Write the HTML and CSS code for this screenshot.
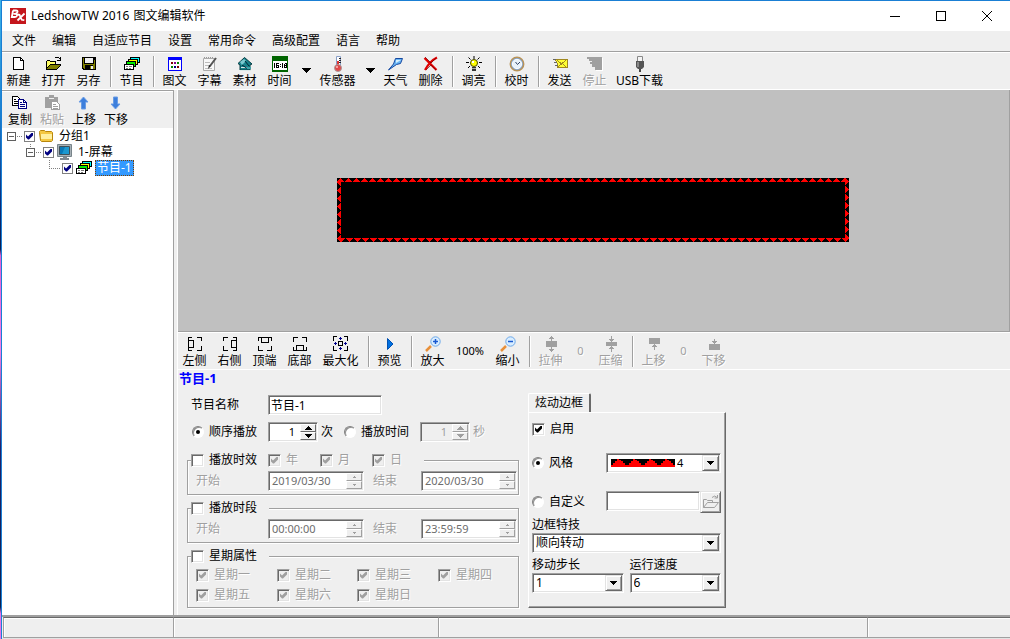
FILE: index.html
```html
<!DOCTYPE html>
<html lang="zh-CN">
<head>
<meta charset="utf-8">
<title>LedshowTW 2016图文编辑软件</title>
<link rel="stylesheet" href="styles.css">
</head>
<body>
<svg width="0" height="0" class="defs" aria-hidden="true">
  <symbol id="i-program" viewBox="0 0 16 16"><path fill="#0ff" stroke="#000" d="M6.500 1.500h9v5h-9z"/><path fill="#ff0" stroke="#000" d="M4.500 3.500h9v5h-9z"/><path fill="#0e0" stroke="#000" d="M2.500 5.500h9v5h-9z"/><path fill="#fff" stroke="#000" d="M.5 8.500h9v5h-9z"/><path fill="#777" d="M2 10h2v1H2zM5 10h3v1H5zM2 12h2v1H2zM5 12h2v1H5z"/></symbol>
  <symbol id="i-open" viewBox="0 0 16 16"><path fill="#000" d="M0 5h1V4h3v1h6v3h5v1l-4 5H0z"/><path fill="#ff6" d="M1 5h3v1h5v2H4l-3 4z"/><path fill="#808000" d="M4 9h10l-3 4H1z"/><path fill="none" stroke="#000" d="M8.500 2.500l1-1h3l2 2M14.500 1v3.500H11"/></symbol>
  <symbol id="i-max-corners" viewBox="0 0 16 16"><path fill="none" stroke="#000" d="M4 .5H.5V5M.500 10v4.500H4M11 .5h3.500V5M14.500 10v4.500H11"/></symbol>
  <symbol id="i-down" viewBox="0 0 9 5"><path fill="#000" d="M0 0h9L4.500 5z"/></symbol>
</svg>

<div class="window">
  <header class="titlebar">
    <svg class="logo" viewBox="0 0 16 16"><rect width="16" height="16" fill="#c4161c"/><path fill="none" stroke="#fff" stroke-width="1.800" d="M3 2.500h3q2 0 1.500 1.500t-2.500 1.800H3.500M3 2.500L1.800 9h3q2 0 2.300-1.600T5 5.800M7.500 6.500l2 .3 2.300 5 2.500.4M14.500 5.500L7.500 12.500"/></svg>
    <h1 class="title"><span class="title-name">LedshowTW 2016</span>图文编辑软件</h1>
    <div class="window-buttons">
      <button type="button" aria-label="最小化"><svg viewBox="0 0 10 10"><path d="M0 5.500h10"/></svg></button>
      <button type="button" aria-label="最大化窗口"><svg viewBox="0 0 10 10"><path d="M.5 .5h9v9h-9z"/></svg></button>
      <button type="button" aria-label="关闭"><svg viewBox="0 0 10 10" class="smooth"><path d="M0 0l10 10M10 0L0 10"/></svg></button>
    </div>
  </header>

  <nav class="menubar">
    <button type="button">文件</button><button type="button">编辑</button><button type="button">自适应节目</button><button type="button">设置</button><button type="button">常用命令</button><button type="button">高级配置</button><button type="button">语言</button><button type="button">帮助</button>
  </nav>

  <div class="toolbar main-tools">
    <button type="button" class="tool"><svg viewBox="0 0 16 16"><path fill="#fff" stroke="#000" d="M2.500 1.500h7l3 3v9h-10z"/><path fill="none" stroke="#000" d="M9.500 1.500v3h3"/></svg>新建</button>
    <button type="button" class="tool"><svg viewBox="0 0 16 16"><use href="#i-open"/></svg>打开</button>
    <button type="button" class="tool"><svg viewBox="0 0 16 16"><path fill="#000" d="M1 1h14v13H2l-1-1z"/><path fill="#808000" d="M2 2h1v6h10V4h1v9H3l-1-1z"/><path fill="#efefef" d="M4 2h8v5H4zM10 10h2v3h-2z"/><path fill="#000" d="M4 9h8v1H4zM4 10h5v4H4z"/></svg>另存</button>
    <i class="sep"></i>
    <button type="button" class="tool"><svg viewBox="0 0 16 16"><use href="#i-program"/></svg>节目</button>
    <i class="sep"></i>
    <button type="button" class="tool"><svg viewBox="0 0 16 16"><path fill="#00f" d="M1 1h14v14H1z"/><path fill="#fff" d="M2 4h12v10H2z"/><path fill="#800000" d="M4 6h2v2H4zM10 10h2v2h-2z"/><path fill="#808" d="M7 6h2v2H7z"/><path fill="#080" d="M10 6h2v2h-2zM4 10h2v2H4z"/><path fill="#008" d="M7 10h2v2H7z"/></svg>图文</button>
    <button type="button" class="tool"><svg viewBox="0 0 16 16" class="smooth"><path fill="#f8f8f8" stroke="#aaa" d="M1.500 2.500h11v12h-11z"/><path stroke="#999" stroke-dasharray="1 1" d="M2 1.500h10"/><path stroke="#bbb" d="M3 6.500h5M3 9.500h4M3 12.500h7"/><path stroke="#555" stroke-width="2" d="M14 2L8 10"/><path fill="#222" d="M7 9l2 1-3 3z"/></svg>字幕</button>
    <button type="button" class="tool"><svg viewBox="0 0 16 16" class="smooth"><path fill="#17818a" stroke="#063d43" d="M1 7.500L7.500 1.500 15 8l-2 1v5H3V9z"/><path fill="#7cc9d0" d="M3 6l4-3 2 2-4 4z"/><path fill="#d9e8e8" d="M4 11h6v1H4zM3 14h11v1H3z"/><path stroke="#023" d="M8 5l4 5M5 9l6 4"/><path fill="#3fa3aa" d="M10 11h4v2h-4z"/></svg>素材</button>
    <button type="button" class="tool"><svg viewBox="0 0 16 16"><path fill="#006400" d="M0 0h16v16H0z"/><path fill="#fff" d="M1 5h14v9H1z"/><path fill="none" stroke="#000" d="M2.500 7v5M6.500 7.500h-2v4h2v-2h-2M8.500 8v1M8.500 10v1M10.500 7v5M12.500 7.500h2v4h-2v-4M12 9.500h2"/></svg>时间</button>
    <button type="button" class="drop" aria-label="时间选项"><svg viewBox="0 0 9 5"><use href="#i-down"/></svg></button>
    <button type="button" class="tool medium"><svg viewBox="0 0 16 16" class="smooth"><path fill="#fff" stroke="#8aa0c8" d="M6.500.5h4v11h-4z"/><path stroke="#222" d="M9 2.500h2M9 4.500h2M9 6.500h2"/><path fill="#d33" d="M7 5h2v6H7z"/><circle cx="8" cy="12" r="3.500" fill="#e04848" stroke="#a99"/><circle cx="7" cy="11" r="1" fill="#fbb"/></svg>传感器</button>
    <button type="button" class="drop" aria-label="传感器选项"><svg viewBox="0 0 9 5"><use href="#i-down"/></svg></button>
    <button type="button" class="tool"><svg viewBox="0 0 16 16" class="smooth"><path fill="#69b5f4" stroke="#1648a0" d="M7.500 2.500h7l-2 5-4 1-8 5.500 5-6z"/><path fill="#d4f0ff" d="M8 4h5L8 7z"/></svg>天气</button>
    <button type="button" class="tool"><svg viewBox="0 0 16 16" class="smooth"><path fill="none" stroke="#e00000" stroke-width="2.200" d="M1.500 2l12 12M14 1.500Q7 5 2 14"/><path fill="none" stroke="#700" stroke-width=".7" d="M2 1l6 6 5-5M3 14l5-5 5 5"/></svg>删除</button>
    <i class="sep"></i>
    <button type="button" class="tool"><svg viewBox="0 0 16 16" class="smooth"><path stroke="#000" d="M8 0v3M2.500 1.500l2 2M13.500 1.500l-2 2M0 6.500h3M13 6.500h3M2 12l2-2M14 12l-2-2"/><circle cx="8" cy="7" r="3.500" fill="#ff0" stroke="#440"/><path fill="#fff" d="M6 5h2v2H6z"/><path fill="#333" d="M6 11h4v4H6z"/><path stroke="#aaa" d="M6 12.500h4"/></svg>调亮</button>
    <i class="sep"></i>
    <button type="button" class="tool"><svg viewBox="0 0 16 16" class="smooth"><circle cx="8" cy="8" r="6.700" fill="#7fa6d8" stroke="#b89358" stroke-width="1.500"/><circle cx="8" cy="8" r="4.700" fill="#e8f2fb" stroke="#fff"/><path fill="none" stroke="#346" d="M6.500 6l2 2.500L11 6"/></svg>校时</button>
    <i class="sep"></i>
    <button type="button" class="tool"><svg viewBox="0 0 16 16"><path fill="#ff3" stroke="#a08820" d="M3.500 3.500h12v8h-10v-3z"/><path fill="none" stroke="#a08820" d="M5 4l4.500 4L14 4M6 11l3-3M14 11l-3-3"/><path stroke="#666" d="M1 3.500h3M2 6.500h3M3 9.500h3"/></svg>发送</button>
    <button type="button" class="tool" disabled><svg viewBox="0 0 16 16"><path fill="#fff" d="M6 2h10v13H9v-4H6z"/><path fill="#a0a0a0" d="M0 1h15v13H8v-3H5V8H3V6h2V5H2V3H0z"/></svg>停止</button>
    <button type="button" class="tool wide"><svg viewBox="0 0 16 16" class="smooth"><path fill="#f4f4f4" stroke="#888" d="M5.500.5h5v5h-5z"/><path fill="#555" d="M4 5h8v6l-2 2H6l-2-2z"/><path fill="#888" d="M5 6h2v5H5z"/><path fill="#444" d="M7 13h2v3H7z"/></svg>USB下载</button>
  </div>

  <main class="workspace">
    <aside class="side">
      <div class="side-tools">
        <button type="button" class="tool"><svg viewBox="0 0 16 16"><path fill="#fff" stroke="#000" d="M.5 1.500h5l3 3v6h-8z"/><path fill="none" stroke="#000" d="M2 4.500h2M2 6.500h4M2 8.500h4"/><path fill="#fff" stroke="#000080" d="M6.500 4.500h5l3 3v6h-8z"/><path fill="none" stroke="#000080" d="M11.500 4v3.500h3M8 7.500h2M8 9.500h5M8 11.500h5"/></svg>复制</button>
        <button type="button" class="tool" disabled><svg viewBox="0 0 16 16"><path fill="#a0a0a0" d="M1 2h4V0h5v2h4v11H1z"/><path fill="#efefef" d="M5 3h5v1H5z"/><path fill="#fff" stroke="#a0a0a0" d="M7.500 6.500h5l3 3v5h-8z"/><path stroke="#a0a0a0" d="M9 9.500h3M9 11.500h5M9 13.500h5"/></svg>粘贴</button>
        <button type="button" class="tool"><svg viewBox="0 0 16 16" class="smooth"><path fill="#3d7fdc" stroke="#6a9ce4" d="M7.500 2l4.500 5H9.500v7h-4V7H3z"/></svg>上移</button>
        <button type="button" class="tool"><svg viewBox="0 0 16 16" class="smooth"><path fill="#3d7fdc" stroke="#6a9ce4" d="M7.500 14L12 9H9.500V2h-4v7H3z"/></svg>下移</button>
      </div>
      <ul class="tree">
        <li><div class="node">
          <svg class="branch" viewBox="0 0 15 16"><path class="box" d="M.5 4.500h8v8h-8zM2 8.500h5"/><path class="dots" d="M10 8.500h5"/></svg>
          <input type="checkbox" class="flat" id="n1" checked>
          <svg class="pic smooth" viewBox="0 0 16 16"><path fill="#f4c842" stroke="#b8860b" d="M1.500 4.500v-1l1-1h4l1 1h6l1 1v8l-1 1h-10l-1-1z"/><path fill="#fff0a0" d="M3 6h11v5H3z"/></svg>
          <label for="n1">分组1</label></div>
          <ul>
            <li><div class="node">
              <svg class="branch" viewBox="0 0 15 16"><path class="dots" d="M4.500 0v4"/><path class="box" d="M.5 4.500h8v8h-8zM2 8.500h5"/><path class="dots" d="M10 8.500h5"/></svg>
              <input type="checkbox" class="flat" id="n2" checked>
              <svg class="pic smooth" viewBox="0 0 16 16"><path fill="#a8b2b8" stroke="#78848a" d="M.5 .5h14v12H.5z"/><path fill="#0878b8" stroke="#405058" d="M2.500 2.500h10v8h-10z"/><path fill="#1c98d0" d="M8 3h4v7H5z"/><path fill="#808890" d="M6 13h4v1H6zM3 14h9v2H3z"/></svg>
              <label for="n2">1-屏幕</label></div>
              <ul>
                <li><div class="node">
                  <svg class="branch" viewBox="0 0 15 16"><path class="dots" d="M4.500 0v8.500H15"/></svg>
                  <input type="checkbox" class="flat" id="n3" checked>
                  <svg class="pic" viewBox="0 0 16 16"><use href="#i-program"/></svg>
                  <label for="n3" class="selected">节目-1</label></div></li>
              </ul></li>
          </ul></li>
      </ul>
    </aside>

    <section class="content">
      <div class="stage">
        <svg class="led" viewBox="0 0 512 64">
          <defs>
            <pattern id="up" width="8" height="4" patternUnits="userSpaceOnUse"><path fill="red" d="M3 0h1v1h1v1h1v1h1v1H0V3h1V2h1V1h1z"/></pattern>
            <pattern id="dn" width="8" height="4" patternUnits="userSpaceOnUse"><path fill="red" d="M1 0h7v1H7v1H6v1H5v1H4V3H3V2H2V1H1z"/></pattern>
            <pattern id="lf" width="4" height="8" patternUnits="userSpaceOnUse"><path fill="red" d="M4 1v7H3V7H2V6H1V5H0V4h1V3h1V2h1V1z"/></pattern>
            <pattern id="rt" width="4" height="8" patternUnits="userSpaceOnUse"><path fill="red" d="M0 0v7h1V6h1V5h1V4h1V3H3V2H2V1H1V0z"/></pattern>
          </defs>
          <rect width="512" height="64"/>
          <rect width="4" height="64" fill="url(#lf)"/><rect x="508" width="4" height="64" fill="url(#rt)"/>
          <rect width="512" height="4" fill="url(#up)"/><rect y="60" width="512" height="4" fill="url(#dn)"/>
        </svg>
      </div>

      <div class="toolbar align-tools">
        <button type="button" class="tool"><svg viewBox="0 0 16 16"><path fill="none" stroke="#000" d="M5 1.500H1.500v13H5M1.500 4.500h5v7h-5M10 1.500h4.500V5M14.500 10v4.500H10"/></svg>左侧</button>
        <button type="button" class="tool"><svg viewBox="0 0 16 16"><path fill="none" stroke="#000" d="M11 1.500h3.500v13H11M14.500 4.500h-5v7h5M6 1.500H1.500V5M1.500 10v4.500H6"/></svg>右侧</button>
        <button type="button" class="tool"><svg viewBox="0 0 16 16"><path fill="none" stroke="#000" d="M1.500 5V1.500h13V5M4.500 1.500v5h7v-5M1.500 10v4.500H6M14.500 10v4.500H10"/></svg>顶端</button>
        <button type="button" class="tool"><svg viewBox="0 0 16 16"><path fill="none" stroke="#000" d="M1.500 11v3.500h13V11M4.500 14.500v-5h7v5M1.500 6V1.500H6M14.500 6V1.500H10"/></svg>底部</button>
        <button type="button" class="tool medium"><svg viewBox="0 0 16 16"><use href="#i-max-corners" width="16" height="16"/><path fill="none" stroke="#000" d="M5.500 5.500h4v4h-4z"/><path fill="none" stroke="#00008b" d="M7.500 1v3M6 2.500h3M7.500 11v3M6 12.500h3M1 7.500h3M2.500 6v3M11 7.500h3M12.500 6v3"/></svg>最大化</button>
        <i class="sep"></i>
        <button type="button" class="tool"><svg viewBox="0 0 16 16" class="smooth"><path fill="#0070e0" stroke="#0050b0" d="M5.500 2.500L11 8l-5.500 5.500z"/></svg>预览</button>
        <i class="sep"></i>
        <button type="button" class="tool"><svg viewBox="0 0 16 16" class="smooth"><path stroke="#e8903a" stroke-width="2.500" d="M1 15l5-5"/><circle cx="10.500" cy="5.500" r="4.700" fill="#d8edff" stroke="#6da8e8"/><path stroke="#1858d0" stroke-width="1.500" d="M8 5.500h5M10.500 3v5"/></svg>放大</button>
        <output class="zoom">100%</output>
        <button type="button" class="tool"><svg viewBox="0 0 16 16" class="smooth"><path stroke="#e8903a" stroke-width="2.500" d="M1 15l5-5"/><circle cx="10.500" cy="5.500" r="4.700" fill="#d8edff" stroke="#6da8e8"/><path stroke="#1858d0" stroke-width="1.500" d="M8 5.500h5"/></svg>缩小</button>
        <i class="sep"></i>
        <button type="button" class="tool" disabled><svg viewBox="0 0 16 16"><path fill="#a0a0a0" d="M3 5h11v6H3zM8 0h1v1h1v1h1v1H9v2H8V3H6V2h1V1h1zM8 16h1v-1h1v-1h1v-1H9v-2H8v2H6v1h1v1h1z"/></svg>拉伸</button>
        <output class="count">0</output>
        <button type="button" class="tool" disabled><svg viewBox="0 0 16 16"><path fill="#a0a0a0" d="M3 6h11v4H3zM8 0h1v3h2v1h-1v1H9v1H8V5H7V4H6V3h2zM8 16h1v-3h2v-1h-1v-1H9v-1H8v1H7v1H6v1h2z"/></svg>压缩</button>
        <i class="sep"></i>
        <button type="button" class="tool" disabled><svg viewBox="0 0 16 16"><path fill="#a0a0a0" d="M3 2h11v6H3zM8 14h1v-3h2v-1h-1V9H9V8H8v1H7v1H6v1h2z"/></svg>上移</button>
        <output class="count">0</output>
        <button type="button" class="tool" disabled><svg viewBox="0 0 16 16"><path fill="#a0a0a0" d="M3 8h11v6H3zM8 3h1v2h2v1h-1v1H9v1H8V7H7V6H6V5h2z"/></svg>下移</button>
      </div>

      <form class="properties">
        <h2>节目-1</h2>
        <div class="columns">
          <div class="basic">
            <div class="row name-row"><label for="pname">节目名称</label><input id="pname" class="field sunken" type="text" value="节目-1"></div>
            <div class="row play-row">
              <label class="choice"><input type="radio" name="mode" checked>顺序播放</label>
              <span class="spin sunken"><input type="text" value="1" aria-label="播放次数"><span class="arrows"><button type="button" aria-label="增加"><svg viewBox="0 0 7 4"><path d="M0 4h7L3.500 0z"/></svg></button><button type="button" aria-label="减少"><svg viewBox="0 0 7 4"><path d="M0 0h7L3.500 4z"/></svg></button></span></span>
              <span class="unit">次</span>
              <label class="choice"><input type="radio" name="mode">播放时间</label>
              <span class="spin sunken off"><input type="text" value="1" aria-label="播放秒数" disabled><span class="arrows"><button type="button" aria-label="增加" disabled><svg viewBox="0 0 7 4"><path d="M0 4h7L3.500 0z"/></svg></button><button type="button" aria-label="减少" disabled><svg viewBox="0 0 7 4"><path d="M0 0h7L3.500 4z"/></svg></button></span></span>
              <span class="unit off">秒</span>
            </div>

            <fieldset>
              <legend class="validity">
                <label class="choice"><input type="checkbox">播放时效</label>
                <label class="choice off"><input type="checkbox" checked disabled>年</label>
                <label class="choice off"><input type="checkbox" checked disabled>月</label>
                <label class="choice off"><input type="checkbox" checked disabled>日</label>
              </legend>
              <div class="range">
                <label class="off" for="d1">开始</label>
                <span class="spin date sunken"><input id="d1" type="text" value="2019/03/30" disabled><span class="arrows"><button type="button" aria-label="增加" disabled><svg viewBox="0 0 7 4"><path d="M2 3h3L3.500 1z"/></svg></button><button type="button" aria-label="减少" disabled><svg viewBox="0 0 7 4"><path d="M2 1h3L3.500 3z"/></svg></button></span></span>
                <label class="off" for="d2">结束</label>
                <span class="spin date sunken"><input id="d2" type="text" value="2020/03/30" disabled><span class="arrows"><button type="button" aria-label="增加" disabled><svg viewBox="0 0 7 4"><path d="M2 3h3L3.500 1z"/></svg></button><button type="button" aria-label="减少" disabled><svg viewBox="0 0 7 4"><path d="M2 1h3L3.500 3z"/></svg></button></span></span>
              </div>
            </fieldset>

            <fieldset>
              <legend><label class="choice"><input type="checkbox">播放时段</label></legend>
              <div class="range">
                <label class="off" for="t1">开始</label>
                <span class="spin date sunken"><input id="t1" type="text" value="00:00:00" disabled><span class="arrows"><button type="button" aria-label="增加" disabled><svg viewBox="0 0 7 4"><path d="M2 3h3L3.500 1z"/></svg></button><button type="button" aria-label="减少" disabled><svg viewBox="0 0 7 4"><path d="M2 1h3L3.500 3z"/></svg></button></span></span>
                <label class="off" for="t2">结束</label>
                <span class="spin date sunken"><input id="t2" type="text" value="23:59:59" disabled><span class="arrows"><button type="button" aria-label="增加" disabled><svg viewBox="0 0 7 4"><path d="M2 3h3L3.500 1z"/></svg></button><button type="button" aria-label="减少" disabled><svg viewBox="0 0 7 4"><path d="M2 1h3L3.500 3z"/></svg></button></span></span>
              </div>
            </fieldset>

            <fieldset>
              <legend><label class="choice"><input type="checkbox">星期属性</label></legend>
              <div class="week">
                <label class="choice off"><input type="checkbox" checked disabled>星期一</label>
                <label class="choice off"><input type="checkbox" checked disabled>星期二</label>
                <label class="choice off"><input type="checkbox" checked disabled>星期三</label>
                <label class="choice off"><input type="checkbox" checked disabled>星期四</label>
                <label class="choice off"><input type="checkbox" checked disabled>星期五</label>
                <label class="choice off"><input type="checkbox" checked disabled>星期六</label>
                <label class="choice off"><input type="checkbox" checked disabled>星期日</label>
              </div>
            </fieldset>
          </div>

          <div class="border-tabs">
            <button type="button" class="tab">炫动边框</button>
            <div class="tab-panel">
              <label class="choice enable"><input type="checkbox" checked>启用</label>
              <div class="pair style-row">
                <label class="choice"><input type="radio" name="border" checked>风格</label>
                <span class="combo sunken"><select class="with-swatch" aria-label="边框风格"><option>4</option></select>
                  <svg class="swatch" viewBox="0 0 64 8"><path d="M0 0h64v8H0z"/><path fill="red" d="M6 0h2v1h2v1h2v2h2v2h2v2H0V6h2V4h2V2h2zM22 0h2v1h2v1h2v2h2v2h2v2H16V6h2V4h2V2h2zM38 0h2v1h2v1h2v2h2v2h2v2H32V6h2V4h2V2h2zM54 0h2v1h2v1h2v2h2v2h2v2H48V6h2V4h2V2h2z"/></svg>
                  <span class="combo-arrow raised"><svg viewBox="0 0 7 4"><path d="M0 0h7L3.500 4z"/></svg></span></span>
              </div>
              <div class="pair custom-row">
                <label class="choice"><input type="radio" name="border">自定义</label>
                <span class="file"><input type="text" class="field sunken" aria-label="自定义边框文件"><button type="button" class="raised" aria-label="打开边框文件" disabled><svg viewBox="0 0 16 16" class="smooth"><path fill="none" stroke="#a0a0a0" d="M.5 13.500v-8h3l1 1h5v2M.5 13.500l4-5h11l-4 5zM9 3.500q3-3 5 0M14.500 1v3h-3"/></svg></button></span>
              </div>
              <label class="caption" for="fx">边框特技</label>
              <span class="combo sunken"><select id="fx"><option>顺向转动</option></select><span class="combo-arrow raised"><svg viewBox="0 0 7 4"><path d="M0 0h7L3.500 4z"/></svg></span></span>
              <div class="halves">
                <div><label class="caption" for="step">移动步长</label>
                <span class="combo sunken"><select id="step"><option>1</option></select><span class="combo-arrow raised"><svg viewBox="0 0 7 4"><path d="M0 0h7L3.500 4z"/></svg></span></span></div>
                <div><label class="caption" for="speed">运行速度</label>
                <span class="combo sunken"><select id="speed"><option>6</option></select><span class="combo-arrow raised"><svg viewBox="0 0 7 4"><path d="M0 0h7L3.500 4z"/></svg></span></span></div>
              </div>
            </div>
          </div>
        </div>
      </form>
    </section>
  </main>

  <footer class="statusbar"><span class="s1"></span><span class="s2"></span><span class="s3"></span><span class="s4"></span></footer>
</div>
</body>
</html>
```
FILE: styles.css
```css
* { box-sizing: border-box; }

body {
  margin: 0;
  height: 100vh;
  display: flex;
  padding-left: 1px;
  background: linear-gradient(#3cb4e8, #1a7fd0 18%, #0a2a78 32%, #0a1c50 39%, #e060d8 40%, #f080e8 55%, #20206a 70%, #0a2050 95%, #e870e8 96%);
  font: 12px/16px "Noto Sans", "Noto Sans CJK SC", sans-serif;
  color: #000;
  overflow: hidden;
}

button, input, select { font: inherit; color: inherit; margin: 0; padding: 0; border: 0; background: none; min-width: 0; }
h1, h2, ul { margin: 0; padding: 0; font: inherit; list-style: none; }
svg { display: block; shape-rendering: crispEdges; flex: none; }
svg.smooth { shape-rendering: auto; }
.defs { display: none; }

.window {
  flex: 1;
  min-width: 0;
  display: flex;
  flex-direction: column;
  border: solid #1a7fd4;
  border-width: 1px 0 0 1px;
  background: #efefef;
}

/* Bevels */
.sunken {
  border: 1px solid;
  border-color: #a0a0a0 #fff #fff #a0a0a0;
  box-shadow: inset 1px 1px #696969, inset -1px -1px #e3e3e3;
  background: #fff;
}
.raised {
  border: 1px solid;
  border-color: #e3e3e3 #696969 #696969 #e3e3e3;
  box-shadow: inset 1px 1px #fff, inset -1px -1px #a0a0a0;
  background: #efefef;
}

/* Title and menu */
.titlebar { display: flex; align-items: center; height: 30px; padding-left: 8px; background: #fff; }
.logo { width: 16px; height: 16px; shape-rendering: auto; }
.title { flex: 1; margin-left: 5px; }
.title-name { margin-right: 4px; }
.window-buttons { display: flex; }
.window-buttons button { width: 46px; height: 28px; display: grid; place-items: center; }
.window-buttons svg { width: 10px; height: 10px; fill: none; stroke: #000; }

.menubar {
  display: flex;
  gap: 16px;
  height: 21px;
  padding: 2px 10px;
  border-bottom: 1px solid #a0a0a0;
  line-height: 16px;
}

/* Tool strips */
.toolbar { display: flex; height: 38px; padding-top: 3px; border: solid #fff; border-width: 1px 0; }
.tool {
  width: 35px;
  padding-right: 2px;
  display: flex;
  flex-direction: column;
  align-items: center;
  line-height: 17px;
  white-space: nowrap;
}
.tool svg { width: 16px; height: 16px; }
.tool.medium { width: 47px; }
.tool.wide { width: 55px; }
.tool:disabled, .off, .count { color: #a0a0a0; text-shadow: 1px 1px #fff; }
.sep { width: 8px; margin-bottom: 2px; display: flex; justify-content: center; }
.sep::before { content: ""; width: 2px; background: linear-gradient(90deg, #a0a0a0 50%, #fff 50%); }
.drop { width: 17px; height: 28px; display: grid; place-items: center; }
.drop svg { width: 9px; height: 5px; }
.zoom, .count { padding-right: 2px; font-size: 11px; line-height: 30px; text-align: center; }
.zoom { width: 40px; }
.count { width: 25px; }

/* Work area */
.workspace { flex: 1; min-height: 0; display: flex; }
.side {
  width: 172px;
  display: flex;
  flex-direction: column;
  border: solid #a0a0a0;
  border-width: 1px 1px 0 0;
  background: #fff;
}
.side-tools { display: flex; height: 36px; margin-top: 1px; padding: 3px 0 0 3px; background: #efefef; }
.side-tools .tool { width: 32px; }
.tree { flex: 1; padding-left: 5px; }
.tree ul { padding-left: 19px; }
.node { display: flex; align-items: center; height: 16px; }
.branch { width: 15px; height: 16px; fill: none; margin-right: 2px; }
.box { stroke: #606060; }
.dots { stroke: #808080; stroke-dasharray: 1 1; }
.pic { width: 16px; height: 16px; margin-left: 3px; }
.node label { margin-left: 3px; padding: 0 1px; border: 1px solid transparent; line-height: 14px; }
.node .selected { background: #3399ff; color: #fff; border: 1px dotted #7a4000; }

.content { flex: 1; min-width: 0; display: flex; flex-direction: column; margin-left: 3px; border-left: 1px solid #fff; }
.stage { flex: 1; display: grid; place-items: center; padding: 0 1px 1px 0; background: #c0c0c0; border: solid #a0a0a0; border-width: 0 1px 1px 0; }
.led { width: 512px; height: 64px; }
.align-tools { height: 38px; }

/* Program properties */
.properties { padding-bottom: 7px; }
.properties h2 { font-size: 13px; font-weight: bold; color: #0000ff; padding-left: 1px; }
.columns { display: flex; align-items: flex-start; gap: 9px; padding: 7px 0 0 9px; }
.basic { width: 332px; margin-top: 2px; }
.row { display: flex; align-items: center; height: 20px; }
.name-row { padding-left: 4px; }
.name-row label { width: 77px; }
.field { height: 20px; padding: 1px 2px; }
.name-row .field { width: 114px; }
.play-row { margin: 7px 0 10px; padding-left: 5px; }
.play-row .choice { width: 76px; }
.unit { width: 26px; padding-left: 3px; }

.choice { display: flex; align-items: center; gap: 5px; white-space: nowrap; }
input[type="checkbox"] {
  appearance: none;
  flex: none;
  width: 13px;
  height: 13px;
  display: grid;
  place-items: center;
  border: 1px solid;
  border-color: #a0a0a0 #fff #fff #a0a0a0;
  box-shadow: inset 1px 1px #696969, inset -1px -1px #e3e3e3;
  background: #fff;
}
input[type="checkbox"]:checked::before {
  content: "";
  width: 7px;
  height: 7px;
  background: #000;
  clip-path: polygon(0 2px, 2px 4px, 6px 0, 7px 0, 7px 3px, 3px 7px, 2px 7px, 0 5px);
}
input[type="checkbox"]:disabled { background: #efefef; }
input[type="checkbox"]:disabled::before { background: #a0a0a0; }
input[type="checkbox"].flat { width: 11px; height: 11px; border: 1px solid #808080; box-shadow: none; }
input[type="checkbox"].flat::before { background: #000080; }
input[type="radio"] {
  appearance: none;
  flex: none;
  width: 12px;
  height: 12px;
  display: grid;
  place-items: center;
  border: 1px solid;
  border-color: #808080 #fff #fff #808080;
  border-radius: 50%;
  box-shadow: inset 1px 1px #909090;
  background: #fff;
}
input[type="radio"]:checked::before { content: ""; width: 4px; height: 4px; border-radius: 50%; background: #000; }

.spin { display: flex; width: 50px; height: 20px; padding: 1px; }
.spin input { flex: 1; width: 0; text-align: right; padding-right: 5px; font-size: 11px; }
.spin.off { background: #efefef; }
.arrows { width: 16px; display: grid; grid-template-rows: 1fr 1fr; }
.arrows button {
  display: grid;
  place-items: center;
  border: 1px solid;
  border-color: #fff #696969 #696969 #fff;
  background: #efefef;
}
.arrows svg { width: 7px; height: 4px; }
.arrows button:disabled { fill: #a0a0a0; border-color: #fff #a0a0a0 #a0a0a0 #fff; }
.date { width: 96px; }
.date input { text-align: left; padding: 0 0 0 2px; color: #6d6d6d; }

fieldset {
  margin: 0 0 5px;
  padding: 3px 1px 3px 8px;
  border: 1px solid #a0a0a0;
  box-shadow: 1px 1px #fff, inset 1px 1px #fff;
  min-width: 0;
}
fieldset:last-child { margin: 0; padding: 1px 0 2px 8px; }
legend { height: 16px; margin-left: -5px; padding: 0 12px 0 0; background: #efefef; }
.validity { display: grid; grid-template-columns: 77px 52px 52px 52px; padding: 0; }
.range { display: grid; grid-template-columns: 72px 105px 48px 96px; align-items: center; }
.week { display: grid; grid-template-columns: 81px 80px 81px 1fr; grid-auto-rows: 20px; }

/* Border effects */
.border-tabs { width: 198px; }
.tab {
  display: block;
  width: 63px;
  height: 19px;
  border: solid #fff;
  border-width: 1px 2px 0 1px;
  border-right-color: #696969;
  border-radius: 2px 2px 0 0;
}
.tab-panel {
  display: flex;
  flex-direction: column;
  padding: 8px 4px 14px 3px;
  border: 1px solid;
  border-color: #fff #696969 #696969 #fff;
  box-shadow: inset -1px -1px #a0a0a0;
}
.enable { height: 16px; }
.pair { display: grid; grid-template-columns: 1fr 115px; align-items: center; }
.style-row { margin: 16px 0 18px; }
.file { display: flex; }
.file .field { flex: 1; width: 0; }
.file button { width: 21px; height: 22px; display: grid; place-items: center; }
.file svg { width: 16px; height: 16px; }
.combo { display: grid; grid-template-columns: 1fr 17px; height: 20px; padding: 1px; align-items: center; }
.combo select { grid-area: 1 / 1 / 2 / 3; appearance: none; height: 16px; padding-left: 2px; line-height: 16px; outline: 0; }
.combo .with-swatch { padding-left: 69px; font-size: 11px; }
.swatch { grid-area: 1 / 1; width: 64px; height: 8px; margin-left: 3px; pointer-events: none; }
.combo-arrow { grid-area: 1 / 2; height: 16px; display: grid; place-items: center; pointer-events: none; }
.combo-arrow svg { width: 7px; height: 4px; }
.caption { display: block; margin-top: 4px; }
.halves { display: grid; grid-template-columns: 1fr 1fr; gap: 6px; }

/* Status bar */
.statusbar {
  display: flex;
  height: 24px;
  padding-left: 1px;
  border-top: 2px solid #a0a0a0;
  border-bottom: 1px solid #e3e3e3;
}
.statusbar span {
  border: solid #a0a0a0;
  border-width: 1px 0 1px 1px;
  border-top-color: #696969;
  box-shadow: inset 1px 1px #fff;
}
.s1 { width: 170px; }
.s2 { width: 265px; }
.s3 { width: 429px; }
.s4 { flex: 1; }
```
